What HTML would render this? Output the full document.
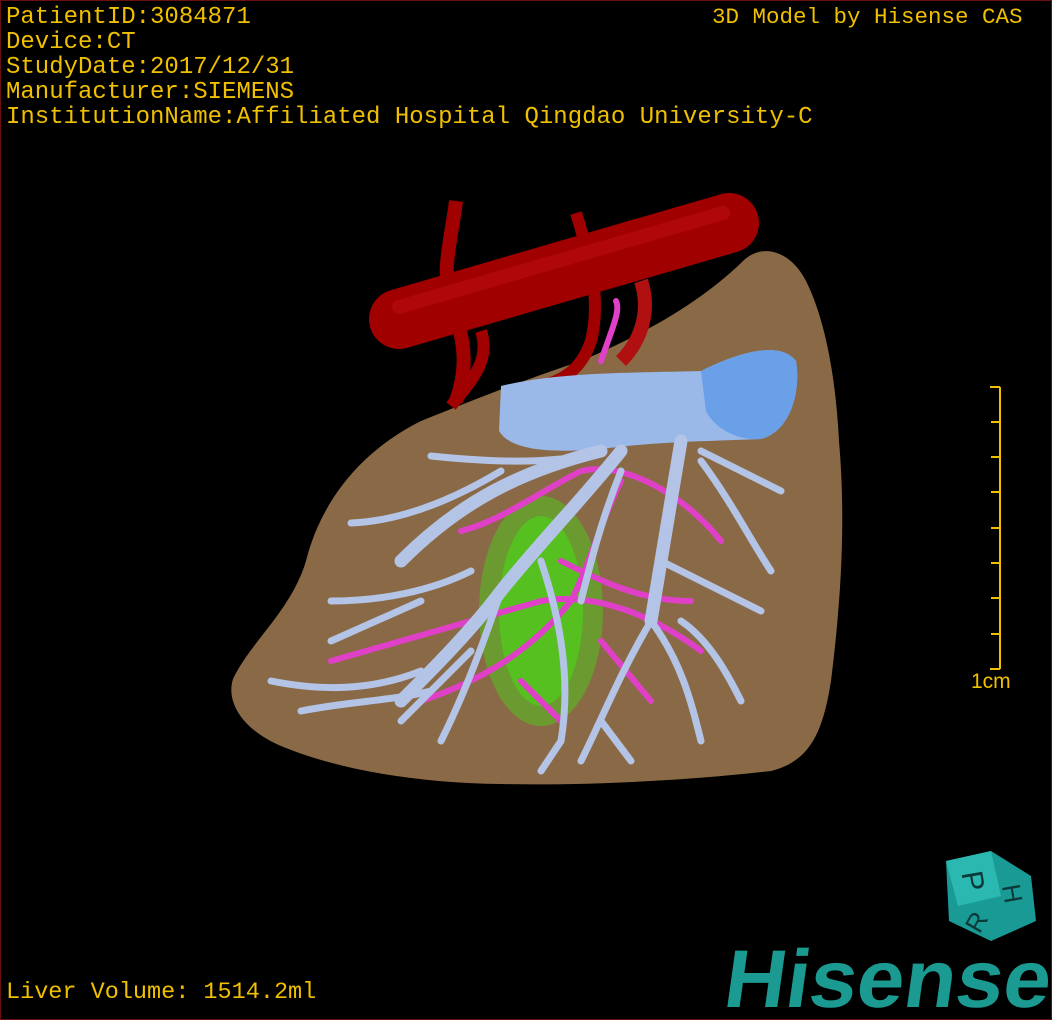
<!DOCTYPE html>
<html><head><meta charset="utf-8"><style>
html,body{margin:0;padding:0;background:#000;}
#c{position:relative;width:1050px;height:1018px;border:1px solid #6a1010;overflow:hidden;background:#000;}
.t{position:absolute;font-family:"Liberation Mono",monospace;color:#f0c000;font-size:24px;line-height:25px;white-space:pre;}
</style></head><body><div id="c">
<svg width="1050" height="1018" style="position:absolute;left:0;top:0">
<path d="M232,678 C250,640 290,610 305,560 C320,500 360,450 420,420 C470,400 520,380 580,360 C650,330 700,300 740,262 C760,240 790,250 805,280 C825,320 835,380 838,440 C845,520 840,600 830,680 C822,730 810,760 770,770 C700,778 600,785 500,783 C420,782 340,770 280,745 C240,728 225,700 232,678 Z" fill="#8a6a46"/>
<ellipse cx="540" cy="610" rx="62" ry="115" fill="#6a9a30"/>
<ellipse cx="540" cy="610" rx="42" ry="95" fill="#55c020"/>
<path d="M455,200 C450,240 440,270 450,300 C460,330 470,360 455,400" stroke="#a00000" stroke-width="14" fill="none"/>
<path d="M575,212 C590,260 600,300 590,340 C580,370 560,380 540,385" stroke="#a00000" stroke-width="12" fill="none"/>
<path d="M640,280 C650,310 640,340 620,360" stroke="#b01010" stroke-width="14" fill="none"/>
<path d="M480,330 C490,360 470,380 450,405" stroke="#a00000" stroke-width="12" fill="none"/>
<path d="M398,318 L728,222" stroke="#a00000" stroke-width="60" stroke-linecap="round"/>
<path d="M398,306 L722,212" stroke="#c01010" stroke-width="14" stroke-linecap="round" opacity=".5"/>
<g stroke="#e040c8" stroke-width="6" fill="none" stroke-linecap="round">
<path d="M330,660 C400,640 470,620 540,600 C600,590 660,620 700,650"/>
<path d="M420,700 C480,680 530,650 570,600 C590,560 600,520 620,480"/>
<path d="M460,530 C500,520 540,490 580,470 C620,460 680,490 720,540"/>
<path d="M600,360 C610,330 620,310 615,300"/>
<path d="M560,560 C600,580 640,600 690,600 M520,680 L560,720 M600,640 L650,700"/>
</g>
<path d="M500,385 C560,370 640,372 700,370 C740,350 780,340 795,360 C800,390 790,430 760,438 C720,440 660,440 600,448 C550,452 510,450 498,430 Z" fill="#9ab8e8"/>
<path d="M700,370 C740,350 780,340 795,360 C800,390 790,430 760,438 C740,440 715,430 705,410 Z" fill="#6aa0e8"/>
<g stroke="#b4c4e6" fill="none" stroke-linecap="round">
<g stroke-width="13">
<path d="M620,450 C580,500 540,540 500,590 C470,630 430,670 400,700"/>
<path d="M680,440 C670,500 660,560 650,620"/>
<path d="M600,450 C520,470 460,500 400,560"/>
</g>
<g stroke-width="7">
<path d="M430,455 C480,460 520,462 560,458"/>
<path d="M350,522 C400,520 450,500 500,470"/>
<path d="M330,600 C380,600 430,590 470,570"/>
<path d="M270,680 C320,690 370,690 420,670"/>
<path d="M300,710 C350,700 390,700 430,690"/>
<path d="M500,590 C480,650 460,700 440,740"/>
<path d="M540,560 C560,620 570,680 560,740"/>
<path d="M650,620 C620,670 600,720 580,760"/>
<path d="M650,620 C680,660 690,700 700,740"/>
<path d="M700,460 C730,500 750,540 770,570"/>
<path d="M700,450 C740,470 760,480 780,490"/>
<path d="M660,560 C700,580 740,600 760,610"/>
<path d="M620,470 C600,520 590,560 580,600"/>
<path d="M420,600 L330,640 M470,650 L400,720 M560,740 L540,770"/>
<path d="M680,620 C710,640 730,680 740,700 M600,720 L630,760"/>
</g>
</g>
<g stroke="#f0c000" stroke-width="2">
<path d="M999,386 V668"/>
<path d="M989,386H999M990,421H999M990,456H999M990,491H999M990,527H999M990,562H999M990,597H999M990,633H999M989,668H999"/>
</g>
<path d="M945,860 L990,850 L1030,875 L1035,920 L990,940 L948,920 Z" fill="#1a9a95"/>
<path d="M945,860 L990,850 L1000,895 L957,905 Z" fill="#2ab8b0"/>
<text x="962" y="890" font-family="Liberation Sans,sans-serif" font-size="30" fill="#0a3a38" transform="rotate(80 972 880)">P</text>
<text x="1005" y="900" font-family="Liberation Sans,sans-serif" font-size="26" fill="#0a3a38" transform="rotate(80 1012 890)">H</text>
<text x="965" y="930" font-family="Liberation Sans,sans-serif" font-size="26" fill="#0a3a38" transform="rotate(-60 975 920)">R</text>
<text x="722" y="1006" font-family="Liberation Sans,sans-serif" font-weight="bold" font-size="82" fill="#1a9a90" textLength="326" lengthAdjust="spacingAndGlyphs" transform="skewX(-8) translate(140 0)">Hisense</text>
</svg>
<div class="t" style="left:5px;top:4px">PatientID:3084871
Device:CT
StudyDate:2017/12/31
Manufacturer:SIEMENS
InstitutionName:Affiliated Hospital Qingdao University-C</div>
<div class="t" style="left:711px;top:4px;font-size:22.5px">3D Model by Hisense CAS</div>
<div class="t" style="left:970px;top:668px;font-family:'Liberation Sans',sans-serif;font-size:21px">1cm</div>
<div class="t" style="left:5px;top:979px;font-size:23.5px">Liver Volume: 1514.2ml</div>
</div></body></html>
